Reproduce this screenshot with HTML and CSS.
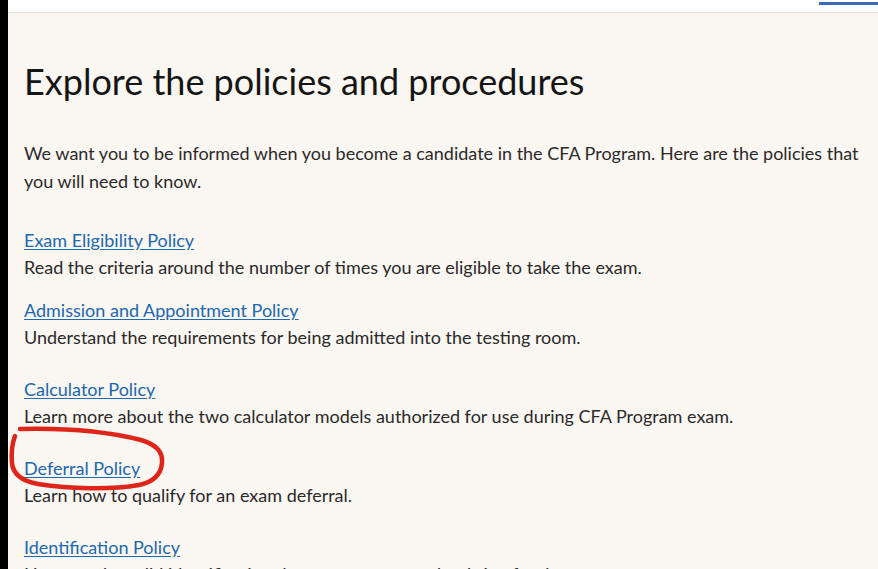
FILE: index.html
```html
<!DOCTYPE html>
<html lang="en">
<head>
<meta charset="utf-8">
<title>Explore the policies and procedures</title>
<link rel="stylesheet" href="styles.css">
</head>
<body>
<div class="frame">
  <div class="edge"></div>
  <div class="page">
    <header class="topbar">
      <span class="tab-indicator"></span>
    </header>
    <main class="content">
      <h1 class="title">Explore the policies and procedures</h1>
      <p class="intro">We want you to be informed when you become a candidate in the CFA Program. Here are the policies that you will need to know.</p>
      <ul class="policies">
        <li class="policy">
          <a class="policy-link" href="#">Exam Eligibility Policy</a>
          <p class="policy-desc">Read the criteria around the number of times you are eligible to take the exam.</p>
        </li>
        <li class="policy policy-tight">
          <a class="policy-link" href="#">Admission and Appointment Policy</a>
          <p class="policy-desc">Understand the requirements for being admitted into the testing room.</p>
        </li>
        <li class="policy">
          <a class="policy-link" href="#">Calculator Policy</a>
          <p class="policy-desc">Learn more about the two calculator models authorized for use during CFA Program exam.</p>
        </li>
        <li class="policy">
          <a class="policy-link" href="#">Deferral Policy</a>
          <p class="policy-desc">Learn how to qualify for an exam deferral.</p>
        </li>
        <li class="policy">
          <a class="policy-link" href="#">Identification Policy</a>
          <p class="policy-desc">Here are the valid identification documents you need to bring for the exam.</p>
        </li>
      </ul>
    </main>
  </div>
  <svg class="annotation" width="878" height="569" viewBox="0 0 878 569" aria-hidden="true">
    <path d="M20 429 C60 428 105 431 141 440 C157 445 163 452 162 463 C161 475 153 482 139 485 C110 490 70 489 38 484 C22 481 13 475 12 463 C11 452 12 444 15 436" fill="none" stroke="#de2519" stroke-width="4.5" stroke-linecap="round" stroke-linejoin="round"/>
  </svg>
</div>
</body>
</html>
```

FILE: styles.css
```css
* { box-sizing: border-box; }

html, body {
  margin: 0;
  padding: 0;
  height: 100%;
  overflow: hidden;
}

body {
  font-family: "Lato", "Open Sans", sans-serif;
  color: #2a2a2a;
  background: #faf6f1;
}

.frame {
  position: relative;
  display: flex;
  width: 878px;
  height: 569px;
  overflow: hidden;
}

.edge {
  flex: 0 0 8px;
  background: #000;
}

.page {
  flex: 1;
  display: flex;
  flex-direction: column;
  background: #faf6f1;
  min-height: 0;
}

.topbar {
  flex: 0 0 13px;
  height: 13px;
  background: #fff;
  border-bottom: 1px solid #e4e2df;
  display: flex;
  justify-content: flex-end;
  align-items: flex-start;
}

.tab-indicator {
  width: 59px;
  height: 3px;
  margin-top: 2px;
  background: #3b6ab8;
}

.content {
  flex: 0 0 auto;
  padding: 46px 0 0 16px;
}

.title {
  margin: 0;
  font-size: 36px;
  line-height: 44px;
  font-weight: 400;
  color: #151515;
  letter-spacing: 0;
}

.intro {
  margin: 36px 0 0;
  font-size: 18px;
  line-height: 28px;
  padding-right: 12px;
}

.policies {
  list-style: none;
  margin: 32px 0 0;
  padding: 0;
}

.policy {
  margin-top: 25px;
}

.policy:first-child {
  margin-top: 0;
}

.policy.policy-tight {
  margin-top: 16px;
}

.policy-link {
  display: block;
  width: max-content;
  font-size: 18px;
  line-height: 27px;
  color: #2068b0;
  text-decoration: underline;
  text-underline-offset: 2px;
}

.policy-desc {
  margin: 0;
  font-size: 18px;
  line-height: 27px;
}

.annotation {
  position: absolute;
  left: 0;
  top: 0;
  pointer-events: none;
}
```
